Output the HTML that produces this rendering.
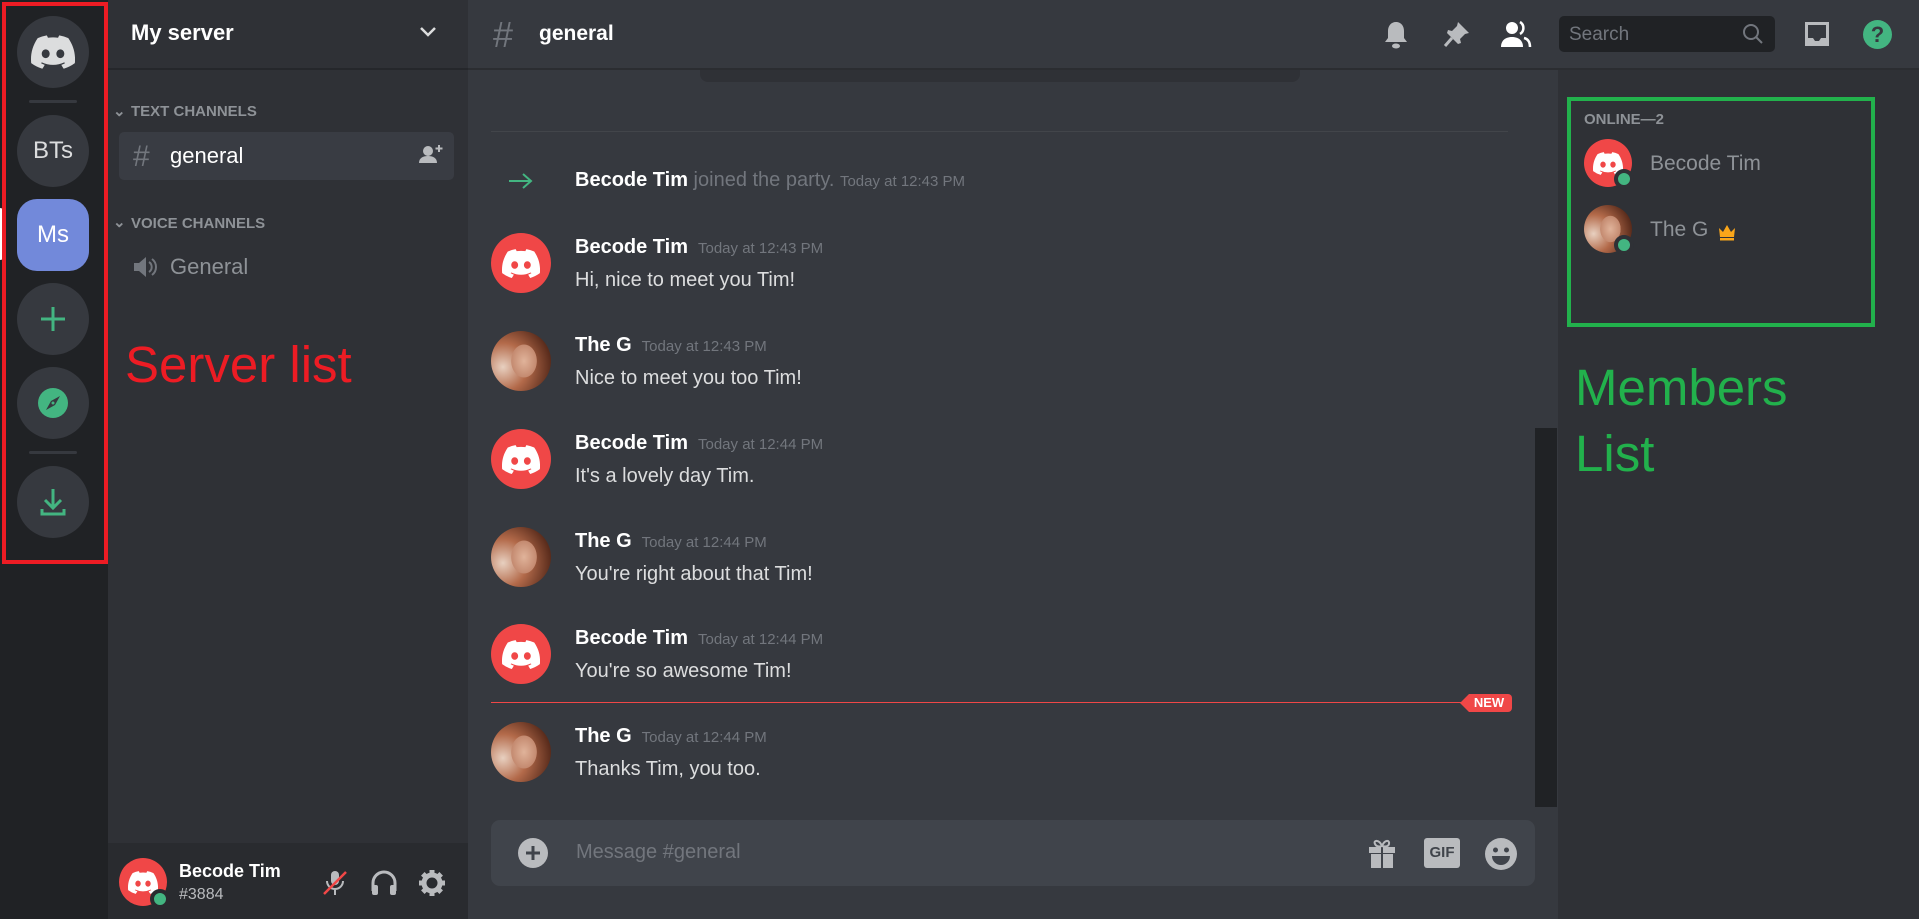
<!DOCTYPE html>
<html><head><meta charset="utf-8"><style>
*{margin:0;padding:0;box-sizing:border-box}
body{width:1919px;height:919px;overflow:hidden;background:#36393f;font-family:"Liberation Sans",sans-serif;position:relative}
.a{position:absolute}
.rail{left:0;top:0;width:108px;height:919px;background:#202225}
.sv{position:absolute;left:17px;width:72px;height:72px;border-radius:50%;background:#36393f;display:flex;align-items:center;justify-content:center;color:#dcddde;font-size:24px}
.sep{position:absolute;left:29px;width:48px;height:3px;background:#36393f;border-radius:2px}
.side{left:108px;top:0;width:360px;height:919px;background:#2f3136}
.mem{left:1558px;top:70px;width:361px;height:849px;background:#2f3136}
.cat{color:#8e9297;font-size:15px;font-weight:bold}
.av{position:absolute;width:60px;height:60px;border-radius:50%;overflow:hidden}
.red{background:#f04747;display:flex;align-items:center;justify-content:center}
.photo{background:radial-gradient(ellipse 35% 45% at 55% 50%,#e0b39a 0%,#c48a70 60%,transparent 62%),radial-gradient(circle at 20% 60%,#e8d0c0 0,#b36a4a 40%,#5a2c1c 80%)}
.nm{position:absolute;left:575px;color:#fff;font-size:20px;font-weight:bold}
.ts{color:#72767d;font-size:15px;font-weight:normal;margin-left:10px}
.tx{position:absolute;left:575px;color:#dcddde;font-size:20px}
</style></head><body>
<div class="a rail"></div>
<div class="sv" style="top:16px"><svg width="44" height="34" viewBox="0 0 127 96"><path fill="#dcddde" d="M107.7,8.07A105.15,105.15,0,0,0,81.47,0a72.06,72.06,0,0,0-3.36,6.83A97.68,97.68,0,0,0,49,6.83,72.37,72.37,0,0,0,45.64,0,105.89,105.89,0,0,0,19.39,8.09C2.79,32.650-1.71,56.6.54,80.21A105.730,105.730,0,0,0,32.71,96.36,77.7,77.7,0,0,0,39.6,85.25a68.42,68.42,0,0,1-10.850-5.18c.91-.66,1.8-1.34,2.66-2a75.57,75.57,0,0,0,64.32,0c.87.71,1.76,1.39,2.66,2a68.68,68.68,0,0,1-10.87,5.19,77,77,0,0,0,6.89,11.1A105.25,105.25,0,0,0,126.6,80.22C129.24,52.84,122.09,29.11,107.7,8.07ZM42.45,65.69C36.18,65.69,31,60,31,53s5-12.74,11.43-12.74S54,46,53.89,53,48.84,65.69,42.45,65.69Zm42.24,0C78.41,65.69,73.25,60,73.25,53s5-12.74,11.44-12.74S96.23,46,96.12,53,91.08,65.69,84.69,65.69Z"/></svg></div>
<div class="sep" style="top:100px"></div>
<div class="sv" style="top:115px">BTs</div>
<div class="a" style="left:0;top:208px;width:4px;height:52px;background:#fff;border-radius:0 4px 4px 0"></div>
<div class="sv" style="top:199px;border-radius:20px;background:#7289da;color:#fff">Ms</div>
<div class="sv" style="top:283px"><svg width="30" height="30" viewBox="0 0 30 30"><path d="M15 3v24M3 15h24" stroke="#43b581" stroke-width="3"/></svg></div>
<div class="sv" style="top:367px"><svg width="30" height="30" viewBox="0 0 30 30"><circle cx="15" cy="15" r="15" fill="#43b581"/><path d="M22 8L17 17 8 22 13 13Z" fill="#36393f"/><circle cx="15" cy="15" r="1.5" fill="#43b581"/></svg></div>
<div class="sep" style="top:451px"></div>
<div class="sv" style="top:466px"><svg width="26" height="30" viewBox="0 0 26 30"><path d="M13 2v18M5 13l8 8 8-8M2 22v5h22v-5" stroke="#43b581" stroke-width="3" fill="none"/></svg></div>
<div class="a" style="left:2px;top:2px;width:106px;height:562px;border:4px solid #ed1c24"></div>

<div class="a side"></div>
<div class="a" style="left:108px;top:0;width:360px;height:70px;border-bottom:2px solid #25272b"></div>
<div class="a" style="left:131px;top:20px;color:#fff;font-size:22px;font-weight:bold">My server</div>
<svg class="a" style="left:418px;top:25px" width="20" height="14" viewBox="0 0 20 14"><path d="M3 3l7 7 7-7" stroke="#dcddde" stroke-width="2.5" fill="none"/></svg>
<div class="a cat" style="left:113px;top:102px">⌄</div>
<div class="a cat" style="left:131px;top:103px">TEXT CHANNELS</div>
<div class="a" style="left:119px;top:132px;width:335px;height:48px;background:#393c43;border-radius:5px"></div>
<div class="a" style="left:133px;top:140px;color:#72767d;font-size:30px">#</div>
<div class="a" style="left:170px;top:143px;color:#fff;font-size:22px">general</div>
<svg class="a" style="left:418px;top:143px" width="26" height="22" viewBox="0 0 26 22"><circle cx="10" cy="8" r="5" fill="#b9bbbe"/><path d="M1 20c0-5 4-7 9-7s9 2 9 7z" fill="#b9bbbe"/><path d="M21 2v7M17.5 5.5h7" stroke="#b9bbbe" stroke-width="2"/></svg>
<div class="a cat" style="left:113px;top:213px">⌄</div>
<div class="a cat" style="left:131px;top:215px">VOICE CHANNELS</div>
<svg class="a" style="left:133px;top:255px" width="26" height="24" viewBox="0 0 26 24"><path d="M1 8h5l7-6v20l-7-6H1z" fill="#72767d"/><path d="M16 7a6 6 0 010 10M19 4a10 10 0 010 16" stroke="#72767d" stroke-width="2" fill="none"/></svg>
<div class="a" style="left:170px;top:254px;color:#8e9297;font-size:22px">General</div>
<div class="a" style="left:125px;top:335px;color:#ed1c24;font-size:51px">Server list</div>
<div class="a" style="left:108px;top:843px;width:360px;height:76px;background:#292b2f"></div>
<div class="a red" style="left:119px;top:858px;width:48px;height:48px;border-radius:50%"><svg width="30" height="23" viewBox="0 0 127 96"><path fill="#fff" d="M107.7,8.07A105,105,0,0,0,81.5,0a72,72,0,0,0-3.4,6.8,97.7,97.7,0,0,0-29.1,0A72.4,72.4,0,0,0,45.6,0,106,106,0,0,0,19.4,8.1C2.8,32.6-1.7,56.6.5,80.2a105.7,105.7,0,0,0,32.2,16.2,77.7,77.7,0,0,0,6.9-11.1,68.4,68.4,0,0,1-10.9-5.2l2.7-2a75.6,75.6,0,0,0,64.3,0l2.7,2a68.7,68.7,0,0,1-10.9,5.2,77,77,0,0,0,6.9,11.1,105.3,105.3,0,0,0,32.2-16.1C129.2,52.8,122.1,29.1,107.7,8.1ZM42.5,65.7C36.2,65.7,31,60,31,53s5-12.7,11.4-12.7S54,46,53.9,53,48.8,65.7,42.5,65.7Zm42.2,0C78.4,65.7,73.3,60,73.3,53s5-12.7,11.4-12.7S96.2,46,96.1,53,91.1,65.7,84.7,65.7Z"/></svg></div>
<div class="a" style="left:150px;top:889px;width:20px;height:20px;border-radius:50%;background:#43b581;border:4px solid #292b2f"></div>
<div class="a" style="left:179px;top:861px;color:#fff;font-size:18px;font-weight:bold">Becode Tim</div>
<div class="a" style="left:179px;top:886px;color:#b9bbbe;font-size:16px">#3884</div>
<svg class="a" style="left:322px;top:869px" width="26" height="28" viewBox="0 0 26 28"><rect x="9" y="2" width="8" height="14" rx="4" fill="#b9bbbe"/><path d="M5 12a8 8 0 0016 0M13 20v6" stroke="#b9bbbe" stroke-width="2" fill="none"/><path d="M2 25L24 3" stroke="#f04747" stroke-width="2.5"/></svg>
<svg class="a" style="left:370px;top:869px" width="28" height="28" viewBox="0 0 28 28"><path d="M3 22v-8a11 11 0 0122 0v8" stroke="#b9bbbe" stroke-width="3" fill="none"/><rect x="2" y="16" width="6" height="10" rx="2" fill="#b9bbbe"/><rect x="20" y="16" width="6" height="10" rx="2" fill="#b9bbbe"/></svg>
<svg class="a" style="left:418px;top:869px" width="28" height="28" viewBox="0 0 28 28"><circle cx="14" cy="14" r="8" fill="none" stroke="#b9bbbe" stroke-width="5"/><g stroke="#b9bbbe" stroke-width="5"><path d="M14 1v5M14 22v5M1 14h5M22 14h5M4.8 4.8l3.5 3.5M19.7 19.7l3.5 3.5M4.8 23.2l3.5-3.5M19.7 8.3l3.5-3.5"/></g></svg>

<!-- members -->
<div class="a mem"></div>

<!-- main header -->
<div class="a" style="left:468px;top:0;width:1451px;height:70px;background:#36393f;border-bottom:2px solid #2b2d31"></div>
<div class="a" style="left:493px;top:14px;color:#72767d;font-size:36px">#</div>
<div class="a" style="left:539px;top:22px;color:#fff;font-size:21px;font-weight:bold">general</div>
<svg class="a" style="left:1382px;top:20px" width="28" height="30" viewBox="0 0 28 30"><path d="M14 2c-5 0-8 4-8 9v7l-3 4h22l-3-4v-7c0-5-3-9-8-9z" fill="#b9bbbe"/><ellipse cx="14" cy="26" rx="4" ry="2.5" fill="#b9bbbe"/></svg>
<svg class="a" style="left:1442px;top:19px" width="30" height="30" viewBox="0 0 30 30"><path d="M16 3l11 11-4 1-5 5 1 4-3 1-11-11 1-3 4 1 5-5z" fill="#b9bbbe"/><path d="M10 19L3 27" stroke="#b9bbbe" stroke-width="3"/></svg>
<svg class="a" style="left:1500px;top:20px" width="32" height="28" viewBox="0 0 32 28"><circle cx="12" cy="8" r="6" fill="#fff"/><path d="M1 27c0-7 5-10 11-10s11 3 11 10z" fill="#fff"/><path d="M20 2a7 7 0 010 12M24 18c4 1 6 4 6 9" stroke="#fff" stroke-width="2.5" fill="none"/></svg>
<div class="a" style="left:1559px;top:16px;width:216px;height:36px;background:#202225;border-radius:5px"></div>
<div class="a" style="left:1569px;top:24px;color:#72767d;font-size:19px">Search</div>
<svg class="a" style="left:1741px;top:22px" width="24" height="24" viewBox="0 0 24 24"><circle cx="10" cy="10" r="7" stroke="#72767d" stroke-width="2" fill="none"/><path d="M15 15l6 6" stroke="#72767d" stroke-width="2"/></svg>
<svg class="a" style="left:1803px;top:20px" width="28" height="28" viewBox="0 0 28 28"><path d="M2 2h24v24H2z" fill="#b9bbbe"/><path d="M5 5h18v13h-5l-2 3h-4l-2-3H5z" fill="#36393f"/></svg>
<div class="a" style="left:1863px;top:20px;width:29px;height:29px;border-radius:50%;background:#43b581;color:#36393f;font-size:22px;font-weight:bold;text-align:center;line-height:29px">?</div>

<!-- messages -->
<div class="a" style="left:700px;top:70px;width:600px;height:12px;background:#2f3136;border-radius:0 0 8px 8px"></div>
<div class="a" style="left:491px;top:131px;width:1017px;height:1px;background:#42454a"></div>
<svg class="a" style="left:508px;top:172px" width="26" height="18" viewBox="0 0 26 18"><path d="M1 9h22M15 2l8 7-8 7" stroke="#43b581" stroke-width="2" fill="none"/></svg>
<div class="a" style="left:575px;top:169px;font-size:20px;color:#72767d"><b style="color:#fff">Becode Tim</b> joined the party. <span style="font-size:15px">Today at 12:43 PM</span></div>

<div class="av red" style="left:491px;top:233px"><svg width="38" height="29" viewBox="0 0 127 96"><path fill="#fff" d="M107.7,8.07A105,105,0,0,0,81.5,0a72,72,0,0,0-3.4,6.8,97.7,97.7,0,0,0-29.1,0A72.4,72.4,0,0,0,45.6,0,106,106,0,0,0,19.4,8.1C2.8,32.6-1.7,56.6.5,80.2a105.7,105.7,0,0,0,32.2,16.2,77.7,77.7,0,0,0,6.9-11.1,68.4,68.4,0,0,1-10.9-5.2l2.7-2a75.6,75.6,0,0,0,64.3,0l2.7,2a68.7,68.7,0,0,1-10.9,5.2,77,77,0,0,0,6.9,11.1,105.3,105.3,0,0,0,32.2-16.1C129.2,52.8,122.1,29.1,107.7,8.1ZM42.5,65.7C36.2,65.7,31,60,31,53s5-12.7,11.4-12.7S54,46,53.9,53,48.8,65.7,42.5,65.7Zm42.2,0C78.4,65.7,73.3,60,73.3,53s5-12.7,11.4-12.7S96.2,46,96.1,53,91.1,65.7,84.7,65.7Z"/></svg></div>
<div class="nm" style="top:236px">Becode Tim<span class="ts">Today at 12:43 PM</span></div>
<div class="tx" style="top:269px">Hi, nice to meet you Tim!</div>

<div class="av photo" style="left:491px;top:331px"></div>
<div class="nm" style="top:334px">The G<span class="ts">Today at 12:43 PM</span></div>
<div class="tx" style="top:367px">Nice to meet you too Tim!</div>

<div class="av red" style="left:491px;top:429px"><svg width="38" height="29" viewBox="0 0 127 96"><path fill="#fff" d="M107.7,8.07A105,105,0,0,0,81.5,0a72,72,0,0,0-3.4,6.8,97.7,97.7,0,0,0-29.1,0A72.4,72.4,0,0,0,45.6,0,106,106,0,0,0,19.4,8.1C2.8,32.6-1.7,56.6.5,80.2a105.7,105.7,0,0,0,32.2,16.2,77.7,77.7,0,0,0,6.9-11.1,68.4,68.4,0,0,1-10.9-5.2l2.7-2a75.6,75.6,0,0,0,64.3,0l2.7,2a68.7,68.7,0,0,1-10.9,5.2,77,77,0,0,0,6.9,11.1,105.3,105.3,0,0,0,32.2-16.1C129.2,52.8,122.1,29.1,107.7,8.1ZM42.5,65.7C36.2,65.7,31,60,31,53s5-12.7,11.4-12.7S54,46,53.9,53,48.8,65.7,42.5,65.7Zm42.2,0C78.4,65.7,73.3,60,73.3,53s5-12.7,11.4-12.7S96.2,46,96.1,53,91.1,65.7,84.7,65.7Z"/></svg></div>
<div class="nm" style="top:432px">Becode Tim<span class="ts">Today at 12:44 PM</span></div>
<div class="tx" style="top:465px">It's a lovely day Tim.</div>

<div class="av photo" style="left:491px;top:527px"></div>
<div class="nm" style="top:530px">The G<span class="ts">Today at 12:44 PM</span></div>
<div class="tx" style="top:563px">You're right about that Tim!</div>

<div class="av red" style="left:491px;top:624px"><svg width="38" height="29" viewBox="0 0 127 96"><path fill="#fff" d="M107.7,8.07A105,105,0,0,0,81.5,0a72,72,0,0,0-3.4,6.8,97.7,97.7,0,0,0-29.1,0A72.4,72.4,0,0,0,45.6,0,106,106,0,0,0,19.4,8.1C2.8,32.6-1.7,56.6.5,80.2a105.7,105.7,0,0,0,32.2,16.2,77.7,77.7,0,0,0,6.9-11.1,68.4,68.4,0,0,1-10.9-5.2l2.7-2a75.6,75.6,0,0,0,64.3,0l2.7,2a68.7,68.7,0,0,1-10.9,5.2,77,77,0,0,0,6.9,11.1,105.3,105.3,0,0,0,32.2-16.1C129.2,52.8,122.1,29.1,107.7,8.1ZM42.5,65.7C36.2,65.7,31,60,31,53s5-12.7,11.4-12.7S54,46,53.9,53,48.8,65.7,42.5,65.7Zm42.2,0C78.4,65.7,73.3,60,73.3,53s5-12.7,11.4-12.7S96.2,46,96.1,53,91.1,65.7,84.7,65.7Z"/></svg></div>
<div class="nm" style="top:627px">Becode Tim<span class="ts">Today at 12:44 PM</span></div>
<div class="tx" style="top:660px">You're so awesome Tim!</div>

<div class="a" style="left:491px;top:702px;width:1000px;height:1px;background:#f04747"></div>
<div class="a" style="left:1460px;top:694px;width:52px;height:18px;background:#f04747;color:#fff;font-size:13px;font-weight:bold;line-height:18px;text-align:center;clip-path:polygon(0 50%,9px 0,100% 0,100% 100%,9px 100%);border-radius:0 4px 4px 0;padding-left:6px">NEW</div>

<div class="av photo" style="left:491px;top:722px"></div>
<div class="nm" style="top:725px">The G<span class="ts">Today at 12:44 PM</span></div>
<div class="tx" style="top:758px">Thanks Tim, you too.</div>

<div class="a" style="left:1535px;top:428px;width:22px;height:379px;background:#202225"></div>

<div class="a" style="left:491px;top:820px;width:1044px;height:66px;background:#40444b;border-radius:9px"></div>
<div class="a" style="left:518px;top:838px;width:30px;height:30px;border-radius:50%;background:#b9bbbe"></div>
<svg class="a" style="left:518px;top:838px" width="30" height="30" viewBox="0 0 30 30"><path d="M15 8v14M8 15h14" stroke="#40444b" stroke-width="3"/></svg>
<div class="a" style="left:576px;top:841px;color:#72767d;font-size:20px">Message #general</div>
<svg class="a" style="left:1367px;top:837px" width="30" height="32" viewBox="0 0 30 32"><path d="M2 10h26v6H2zM4 17h22v14H4z" fill="#b9bbbe"/><path d="M15 10v21" stroke="#40444b" stroke-width="2"/><path d="M15 9c-3-7-9-6-7-2s7 2 7 2c0 0 6 2 7-2s-4-5-7 2" stroke="#b9bbbe" stroke-width="2" fill="none"/></svg>
<div class="a" style="left:1424px;top:838px;width:36px;height:30px;background:#b9bbbe;border-radius:3px;color:#40444b;font-size:15px;font-weight:bold;text-align:center;line-height:30px">GIF</div>
<svg class="a" style="left:1484px;top:837px" width="34" height="34" viewBox="0 0 34 34"><circle cx="17" cy="17" r="16" fill="#b9bbbe"/><circle cx="11.5" cy="13" r="2.5" fill="#40444b"/><circle cx="22.5" cy="13" r="2.5" fill="#40444b"/><path d="M8 19h18a9 9 0 01-18 0z" fill="#40444b"/></svg>

<!-- members content -->
<div class="a" style="left:1567px;top:97px;width:308px;height:230px;border:4px solid #22b14c"></div>
<div class="a cat" style="left:1584px;top:111px">ONLINE—2</div>
<div class="a red" style="left:1584px;top:139px;width:48px;height:48px;border-radius:50%"><svg width="30" height="23" viewBox="0 0 127 96"><path fill="#fff" d="M107.7,8.07A105,105,0,0,0,81.5,0a72,72,0,0,0-3.4,6.8,97.7,97.7,0,0,0-29.1,0A72.4,72.4,0,0,0,45.6,0,106,106,0,0,0,19.4,8.1C2.8,32.6-1.7,56.6.5,80.2a105.7,105.7,0,0,0,32.2,16.2,77.7,77.7,0,0,0,6.9-11.1,68.4,68.4,0,0,1-10.9-5.2l2.7-2a75.6,75.6,0,0,0,64.3,0l2.7,2a68.7,68.7,0,0,1-10.9,5.2,77,77,0,0,0,6.9,11.1,105.3,105.3,0,0,0,32.2-16.1C129.2,52.8,122.1,29.1,107.7,8.1ZM42.5,65.7C36.2,65.7,31,60,31,53s5-12.7,11.4-12.7S54,46,53.9,53,48.8,65.7,42.5,65.7Zm42.2,0C78.4,65.7,73.3,60,73.3,53s5-12.7,11.4-12.7S96.2,46,96.1,53,91.1,65.7,84.7,65.7Z"/></svg></div>
<div class="a" style="left:1614px;top:169px;width:20px;height:20px;border-radius:50%;background:#43b581;border:4px solid #2f3136"></div>
<div class="a" style="left:1650px;top:152px;color:#8e9297;font-size:21px">Becode Tim</div>
<div class="a photo" style="left:1584px;top:205px;width:48px;height:48px;border-radius:50%"></div>
<div class="a" style="left:1614px;top:235px;width:20px;height:20px;border-radius:50%;background:#43b581;border:4px solid #2f3136"></div>
<div class="a" style="left:1650px;top:218px;color:#8e9297;font-size:21px">The G</div>
<svg class="a" style="left:1718px;top:224px" width="18" height="17" viewBox="0 0 18 17"><path d="M1 4l4 4 4-7 4 7 4-4-1 9H2z" fill="#faa61a"/><rect x="2" y="14" width="14" height="2.5" fill="#faa61a"/></svg>
<div class="a" style="left:1575px;top:355px;color:#22b14c;font-size:51px;line-height:66px">Members<br>List</div>
</body></html>
